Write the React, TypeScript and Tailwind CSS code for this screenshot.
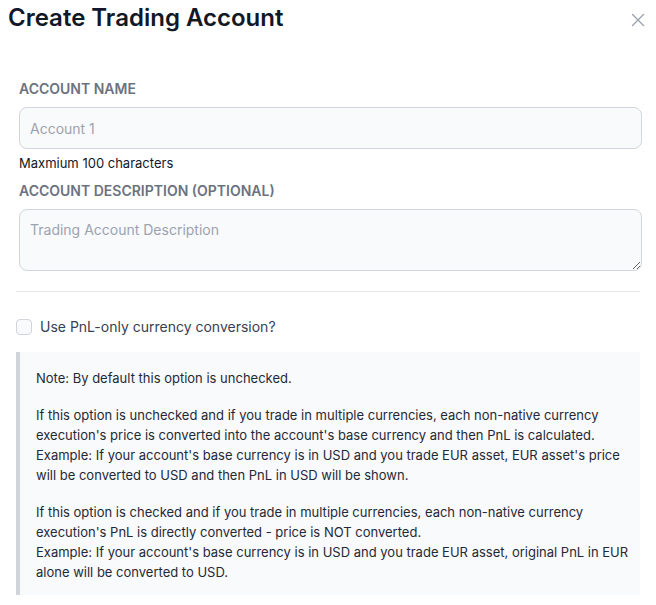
import { useState } from 'react';

const CloseIcon = () => (
  <svg width="14" height="14" viewBox="0 0 14 14" fill="none" stroke="currentColor" strokeWidth="1.4" strokeLinecap="round">
    <path d="M1.5 1.5l11 11M12.5 1.5l-11 11" />
  </svg>
);

const App = () => {
  const [name, setName] = useState('');
  const [desc, setDesc] = useState('');
  const [pnlOnly, setPnlOnly] = useState(false);

  return (
    <div className="w-[656px] h-[605px] bg-white overflow-hidden text-[#111827]" style={{ fontFamily: 'Inter, "Noto Sans", sans-serif' }}>
      {/* Header */}
      <div className="flex items-start justify-between pl-2 pr-[11px] pt-[3px]">
        <h1 className="text-[24px] leading-[30px] font-semibold text-[#111827]">Create Trading Account</h1>
        <button className="mt-[10px] text-[#9ca3af]">
          <CloseIcon />
        </button>
      </div>

      {/* Form */}
      <div className="px-[19px] pt-[46px] pr-[14px]">
        <label className="block text-[14px] leading-5 font-semibold text-[#6b7280] mb-[8px]">ACCOUNT NAME</label>
        <input
          value={name}
          onChange={e => setName(e.target.value)}
          placeholder="Account 1"
          className="block w-full h-[42px] rounded-lg border border-[#d1d5db] bg-[#f9fafb] px-[10px] text-[14px] text-[#111827] placeholder:text-[#9ca3af] outline-none"
        />
        <p className="mt-[4px] text-[13px] leading-5 text-[#111827]">Maxmium 100 characters</p>
        <label className="block mt-[8px] text-[14px] leading-5 font-semibold text-[#6b7280] mb-[8px]">ACCOUNT DESCRIPTION (OPTIONAL)</label>
        <textarea
          value={desc}
          onChange={e => setDesc(e.target.value)}
          placeholder="Trading Account Description"
          className="block w-full h-[62px] rounded-lg border border-[#d1d5db] bg-[#f9fafb] px-[10px] py-[10px] text-[14px] leading-5 text-[#111827] placeholder:text-[#9ca3af] outline-none"
        />
      </div>

      <div className="mx-4 mt-5 border-t border-[#e5e7eb]" />

      <div className="px-4">
        <label className="flex items-center gap-2 mt-[25px] cursor-pointer">
          <input
            type="checkbox"
            checked={pnlOnly}
            onChange={e => setPnlOnly(e.target.checked)}
            className="appearance-none w-4 h-4 rounded border border-[#d1d5db] bg-[#f9fafb] checked:bg-blue-600"
          />
          <span className="text-[14px] leading-5 text-[#374151]">Use PnL-only currency conversion?</span>
        </label>

        {/* Explanation note */}
        <div className="mt-[15px] border-l-4 border-[#d1d5db] bg-[#f9fafb] pl-4 pr-2 pt-[16px] pb-[13px] text-[13px] leading-5 text-[#1f2937]">
          <p className="mb-[17px]">Note: By default this option is unchecked.</p>
          <p>
            If this option is unchecked and if you trade in multiple currencies, each non-native currency execution's price is converted into the account's base currency and then PnL is calculated.
            <br />
            Example: If your account's base currency is in USD and you trade EUR asset, EUR asset's price will be converted to USD and then PnL in USD will be shown.
          </p>
          <p className="mt-[17px]">
            If this option is checked and if you trade in multiple currencies, each non-native currency execution's PnL is directly converted - price is NOT converted.
            <br />
            Example: If your account's base currency is in USD and you trade EUR asset, original PnL in EUR alone will be converted to USD.
          </p>
        </div>
      </div>
    </div>
  );
};

export default App;
